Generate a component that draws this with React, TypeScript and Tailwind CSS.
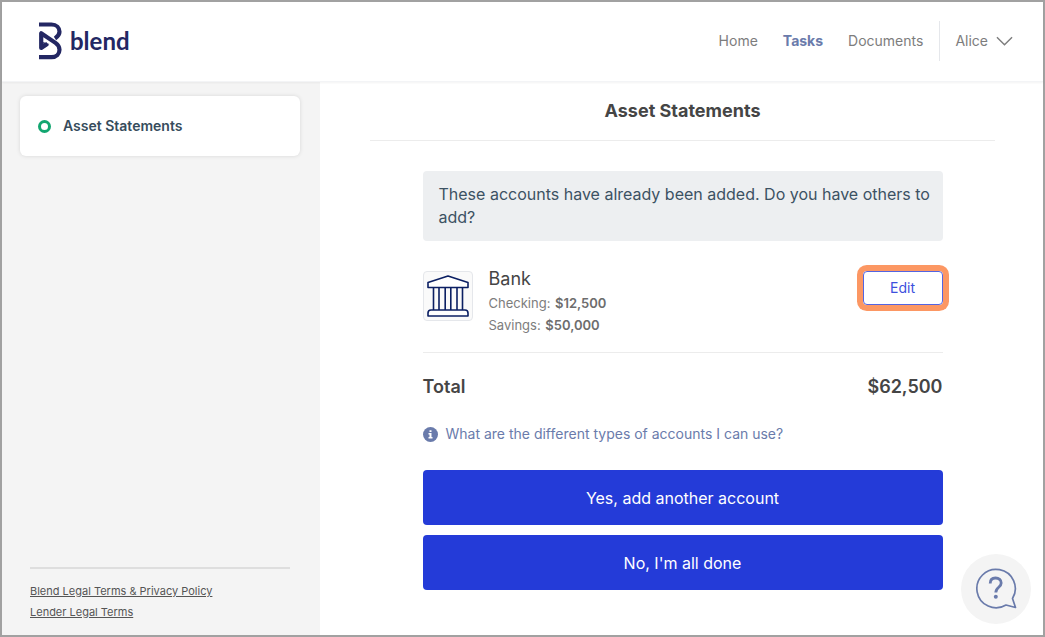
import React from 'react';

interface Account {
  label: string;
  balance: string;
}

const accounts: Account[] = [
  { label: 'Checking', balance: '$12,500' },
  { label: 'Savings', balance: '$50,000' },
];

const Logo: React.FC = () => (
  <a href="#" className="flex items-center gap-2 text-[#232763]" aria-label="blend">
    <svg width="23" height="38" viewBox="0 0 23 38" fill="none" stroke="currentColor" strokeWidth="4.200">
      <path d="M0 2.500H12.500C17.500 2.500 20.500 5.800 20.500 9.800C20.500 12.500 19 14.500 16 16.500" />
      <path d="M0 35.200H12.500C17.500 35.200 20.500 31.800 20.500 27.800C20.500 24.800 19.200 22.800 16.500 20.900L2.200 11.300V26L8.500 21.800" strokeLinejoin="round" />
      <path d="M4 20L10.300 22L5 26Z" fill="currentColor" stroke="none" />
    </svg>
    <span className="font-['Lato'] text-2xl font-bold">blend</span>
  </a>
);

const BankIcon: React.FC = () => (
  <svg width="42" height="42" viewBox="0 0 42 42" fill="none" stroke="#0b1f63" strokeWidth="1.600" strokeLinejoin="round">
    <path d="M1 12.500V7.500L21 1L41 7.500V12.500Z" fill="white" />
    <path d="M6.500 12.500V35M12 12.500V35M18.200 12.500V35M23.800 12.500V35M30 12.500V35M35.500 12.500V35" />
    <path d="M1 41V38C1 36 2 35 4 35H38C40 35 41 36 41 38V41Z" fill="white" />
  </svg>
);

const Header: React.FC = () => (
  <header className="relative z-10 flex h-20 shrink-0 items-center justify-between border-b border-gray-100 bg-white pr-[30px] pb-0.5 pl-[37px] shadow-[0_1px_2px_rgba(0,0,0,0.05)]">
    <Logo />
    <nav className="flex items-center text-sm text-[#7d7d7d]">
      <a href="#">Home</a>
      <a href="#" className="ml-[25px] font-bold text-[#6a7bab]">Tasks</a>
      <a href="#" className="ml-[25px]">Documents</a>
      <button className="ml-4 flex h-10 items-center gap-2 border-l border-gray-200 pl-[15px]">
        Alice
        <svg width="17" height="10" viewBox="0 0 18 10" fill="none" stroke="currentColor" strokeWidth="1.500">
          <path d="M1 1L9 9L17 1" />
        </svg>
      </button>
    </nav>
  </header>
);

const Sidebar: React.FC = () => (
  <aside className="flex w-[318px] shrink-0 flex-col justify-between bg-[#f4f4f4] pt-3.5 pb-3">
    <a href="#" className="mr-5 ml-[18px] flex h-15 items-center gap-3 rounded-md bg-white px-[18px] text-sm font-semibold text-[#364c5c] shadow-[0_0_4px_rgba(0,0,0,0.12)]">
      <span className="h-[13px] w-[13px] rounded-full border-3 border-[#12a670]" />
      Asset Statements
    </a>
    <div className="mr-[30px] ml-7 flex flex-col items-start border-t-2 border-[#dedede] pt-3 text-[11px] leading-[21px] text-[#555555]">
      <a href="#" className="underline">Blend Legal Terms &amp; Privacy Policy</a>
      <a href="#" className="underline">Lender Legal Terms</a>
    </div>
  </aside>
);

export default function App() {
  return (
    <div className="flex min-h-screen flex-col border-2 border-[#a1a1a1] bg-white font-['Inter',sans-serif]">
      <Header />
      <div className="flex flex-1">
        <Sidebar />
        <main className="flex-1 pr-12 pl-[50px]">
          <h1 className="border-b border-[#ececec] pt-[15px] pb-[15px] text-center text-lg font-bold text-[#454545]">Asset Statements</h1>
          <div className="mx-auto max-w-[520px] pt-[30px]">
            <p className="rounded bg-[#edeff1] py-3 pr-2 pl-4 text-base leading-[23px] text-[#3c5263]">
              These accounts have already been added. Do you have others to add?
            </p>

            <section className="mt-[30px] flex items-start gap-4 border-b border-[#ececec] pb-4">
              <div className="flex h-[50px] w-[50px] items-center justify-center rounded border border-gray-200 bg-[#fafafa]">
                <BankIcon />
              </div>
              <div className="flex-1 text-[13px] leading-[22px] text-[#7d7d7d]">
                <h2 className="pb-[5px] text-lg leading-4 text-[#454545]">Bank</h2>
                {accounts.map((account) => (
                  <p key={account.label}>
                    {account.label}: <span className="ml-px font-semibold text-[#6d6d6d]">{account.balance}</span>
                  </p>
                ))}
              </div>
              <button className="h-[34px] w-20 rounded-sm border border-[#5365e2] text-sm text-[#3d50dd] ring-[6px] ring-[#fc9763]">
                Edit
              </button>
            </section>

            <div className="flex justify-between pt-5 text-lg leading-7 font-semibold text-[#454545]">
              <span>Total</span>
              <span>$62,500</span>
            </div>

            <a href="#" className="mt-[23px] flex items-center gap-2 text-sm text-[#6a7bab]">
              <svg width="15" height="15" viewBox="0 0 15 15">
                <circle cx="7.500" cy="7.500" r="7.500" fill="#6a7bab" />
                <path d="M6.500 3.200H8.500V5H6.500ZM5.500 6H8.500V10H9.500V11.500H5.500V10H6.500V7.500H5.500Z" fill="white" />
              </svg>
              What are the different types of accounts I can use?
            </a>

            <div className="mt-[26px] flex flex-col gap-2.5 text-base text-white">
              <button className="h-[55px] rounded-sm bg-[#243bd8]">Yes, add another account</button>
              <button className="h-[55px] rounded-sm bg-[#243bd8]">No, I'm all done</button>
            </div>
          </div>
        </main>
      </div>

      <button aria-label="Help" className="fixed right-3.5 bottom-[13px] flex h-[70px] w-[70px] items-center justify-center rounded-full bg-[#f4f4f4] text-[#6a7bab]">
        <svg width="42" height="42" viewBox="0 0 42 42" fill="none" stroke="currentColor" strokeWidth="1.700" strokeLinejoin="round">
          <path d="M37.500 30.500A19.200 19.200 0 1 0 31 37L40.500 39.500Z" />
          <path d="M15.200 15.500C15.200 11.500 17.500 10 20.500 10C24 10 26.200 12 26.200 15C26.200 19.500 20.800 19 20.800 24.500" strokeWidth="2.800" />
          <circle cx="20.800" cy="28.800" r="2" fill="currentColor" stroke="none" />
        </svg>
      </button>
    </div>
  );
}
